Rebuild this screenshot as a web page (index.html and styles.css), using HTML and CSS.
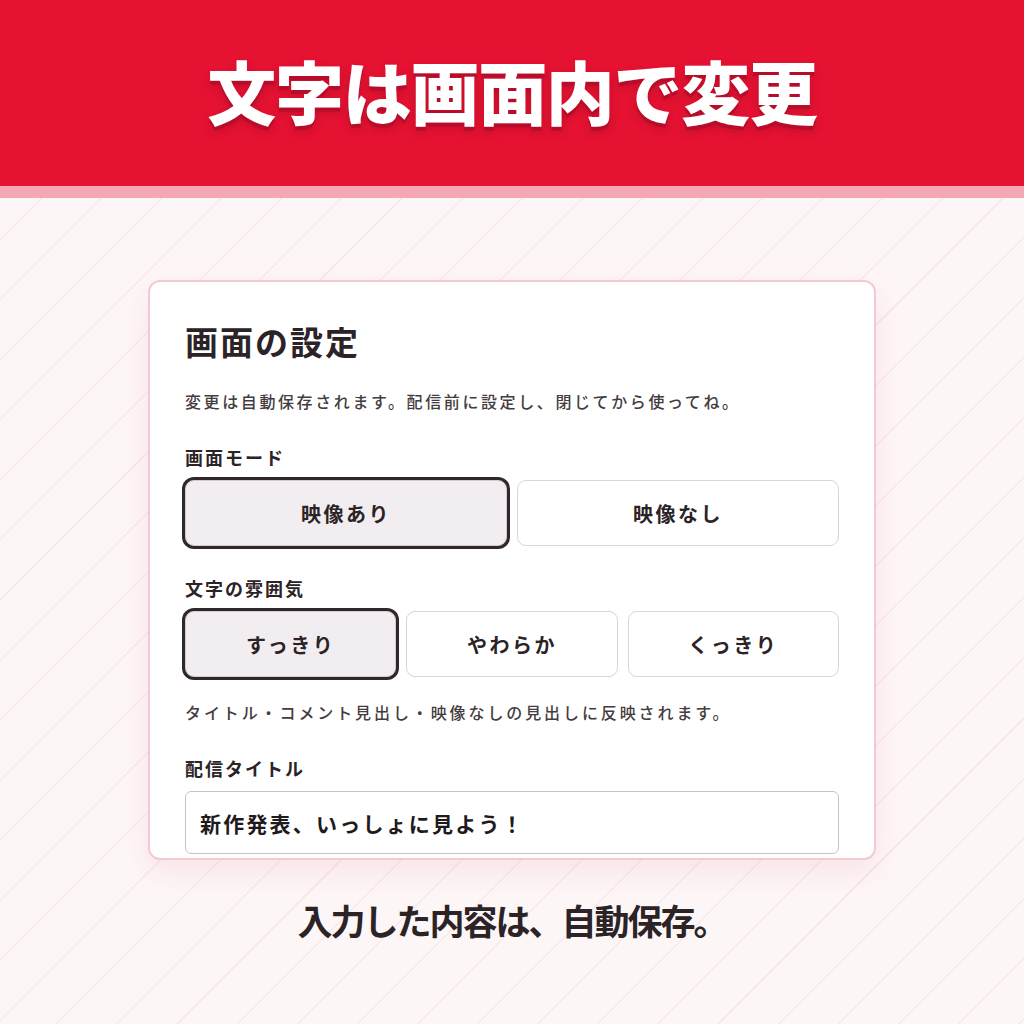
FILE: index.html
```html
<!DOCTYPE html>
<html lang="ja">
<head>
<meta charset="utf-8">
<title>文字は画面内で変更</title>
<link rel="stylesheet" href="styles.css">
</head>
<body>
<header class="hero">
  <h1 class="hero-title">文字は画面内で変更</h1>
</header>
<div class="hero-strip"></div>
<main class="stage">
  <section class="card">
    <h2 class="card-title">画面の設定</h2>
    <p class="card-desc">変更は自動保存されます。配信前に設定し、閉じてから使ってね。</p>

    <div class="field">
      <div class="field-label">画面モード</div>
      <div class="options two">
        <button class="opt is-active">映像あり</button>
        <button class="opt">映像なし</button>
      </div>
    </div>

    <div class="field">
      <div class="field-label">文字の雰囲気</div>
      <div class="options three">
        <button class="opt is-active">すっきり</button>
        <button class="opt">やわらか</button>
        <button class="opt">くっきり</button>
      </div>
      <p class="hint">タイトル・コメント見出し・映像なしの見出しに反映されます。</p>
    </div>

    <div class="field">
      <div class="field-label">配信タイトル</div>
      <div class="text-input">新作発表、いっしょに見よう！</div>
    </div>
  </section>
  <p class="caption">入力した内容は、自動保存。</p>
</main>
</body>
</html>
```

FILE: styles.css
```css
html, body {
  margin: 0;
  padding: 0;
}
body {
  width: 1024px;
  height: 1024px;
  overflow: hidden;
  font-family: "Noto Sans CJK JP", "Noto Sans", sans-serif;
  color: #2b2326;
  background-color: #fdf6f7;
  background-image: repeating-linear-gradient(135deg, transparent 0 41px, #f7e9ec 41px 42.5px);
}
.hero {
  height: 186px;
  background: #e51232;
  display: flex;
  align-items: center;
  justify-content: center;
}
.hero-title {
  margin: 0;
  margin-top: -6px;
  font-size: 69px;
  font-weight: 900;
  color: #ffffff;
  letter-spacing: -1.3px;
  line-height: 1;
  text-shadow: 0 4px 0 #b80d2a, 0 5px 8px rgba(90, 0, 15, 0.25);
}
.hero-strip {
  height: 12px;
  background: #f3a8b4;
}
.stage {
  display: flex;
  flex-direction: column;
  align-items: center;
  padding-top: 82px;
}
.card {
  box-sizing: border-box;
  width: 728px;
  height: 580px;
  overflow: hidden;
  background: #ffffff;
  border: 2px solid #f4c9d2;
  border-radius: 12px;
  box-shadow: 0 12px 30px rgba(226, 120, 140, 0.14);
  padding: 39px 35px 0 35px;
}
.card-title {
  margin: 0;
  font-size: 33px;
  line-height: 40px;
  font-weight: 700;
  letter-spacing: 2px;
  color: #2b2326;
}
.card-desc {
  margin: 29px 0 0;
  font-size: 16px;
  line-height: 22px;
  font-weight: 500;
  letter-spacing: 2.6px;
  color: #453c40;
}
.field {
  margin-top: 33px;
}
.field + .field {
  margin-top: 30px;
}
.field:last-child {
  margin-top: 33px;
}
.field-label {
  font-size: 18px;
  line-height: 24px;
  font-weight: 700;
  letter-spacing: 2px;
  color: #2b2326;
}
.options {
  display: grid;
  gap: 10px;
  margin-top: 11px;
}
.options.two {
  grid-template-columns: 1fr 1fr;
}
.options.three {
  grid-template-columns: 1fr 1fr 1fr;
}
.opt {
  box-sizing: border-box;
  height: 66px;
  border: 1px solid #ddd4d8;
  border-radius: 9px;
  background: #ffffff;
  font-family: inherit;
  font-size: 20px;
  font-weight: 700;
  letter-spacing: 2.5px;
  color: #2b2326;
  padding: 0;
}
.opt.is-active {
  background: #f2edf0;
  border-color: #d4cacf;
  box-shadow: 0 0 0 3px #2f2729;
}
.hint {
  margin: 24px 0 0;
  font-size: 16px;
  line-height: 22px;
  font-weight: 500;
  letter-spacing: 2.9px;
  color: #453c40;
}
.text-input {
  box-sizing: border-box;
  margin-top: 11px;
  height: 63px;
  border: 1px solid #c9c2c5;
  border-radius: 6px;
  background: #ffffff;
  display: flex;
  align-items: center;
  padding: 0 14px;
  font-size: 21px;
  font-weight: 600;
  letter-spacing: 2.2px;
  color: #1f1a1c;
}
.caption {
  margin: 40px 0 0;
  font-size: 35px;
  line-height: 40px;
  font-weight: 700;
  letter-spacing: -2px;
  color: #2b2326;
}
```
